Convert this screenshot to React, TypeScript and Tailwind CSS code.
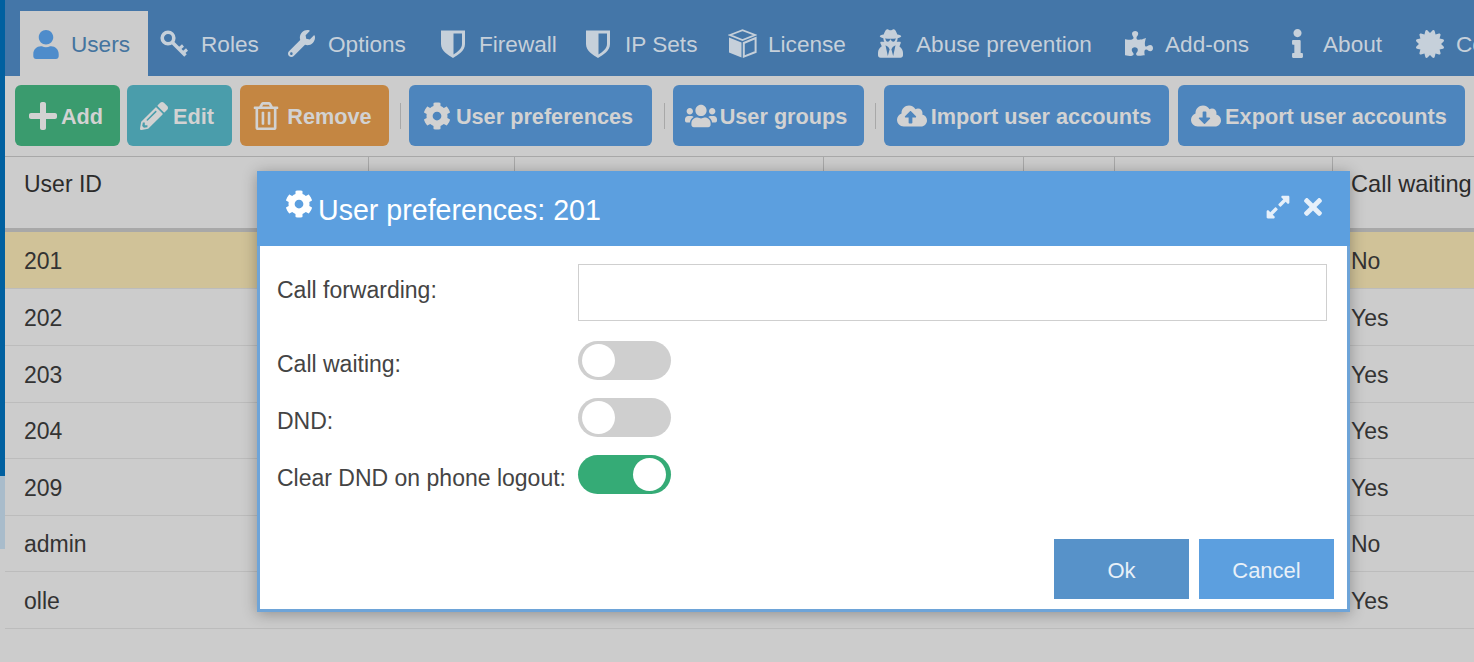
import React from "react";
import {
  FaUser, FaWrench, FaUserSecret, FaPuzzlePiece, FaInfo, FaCertificate,
  FaPlus, FaPencilAlt, FaRegTrashAlt, FaCog, FaUsers, FaCloudUploadAlt, FaCloudDownloadAlt, FaExpandAlt, FaTimes,
} from "react-icons/fa";

function KeyIcon({ className }: { className?: string }) {
  return (
    <svg viewBox="0 0 28 28" fill="none" stroke="currentColor" className={className}>
      <circle cx="8" cy="8" r="5.8" strokeWidth="3.6" />
      <path d="M12 12 L25.5 25.5" strokeWidth="3.6" />
      <path d="M19 19 L23 15.5 M23 23 L27 19.5" strokeWidth="3" />
    </svg>
  );
}

function ShieldIcon({ className }: { className?: string }) {
  return (
    <svg viewBox="0 0 24 29" fill="currentColor" fillRule="evenodd" className={className}>
      <path d="M0 1.5 H24 V15 C24 22 17 26 12 29 C7 26 0 22 0 15 Z M12.5 4.5 V25.5 C16.5 23 21 19.5 21 15 V4.5 Z" />
    </svg>
  );
}

function CubeIcon({ className }: { className?: string }) {
  return (
    <svg viewBox="0 0 29 29" fill="currentColor" className={className}>
      <path d="M1 8.5 L13.5 13.5 V28.5 L1 23.5 Z" />
      <path d="M15.8 14 L27.6 9 V23 L15.8 27.6 Z" fill="none" stroke="currentColor" strokeWidth="2" />
      <path d="M2 6 L14.5 1.2 L27 6 L14.5 11 Z" fill="none" stroke="currentColor" strokeWidth="1.8" />
    </svg>
  );
}

const tabs = [
  { label: "Roles", Icon: KeyIcon, box: "w-[28px] h-[28px]", cls: "pl-[12px] pr-[18px]", gap: "gap-[13px]", w: "w-[56px]" },
  { label: "Options", Icon: FaWrench, box: "w-[27px] h-[27px]", cls: "pl-[13px] pr-[20px]", gap: "gap-[13px]", w: "w-[80px]" },
  { label: "Firewall", Icon: ShieldIcon, box: "w-[24px] h-[29px]", cls: "pl-[13px] pr-[20px]", gap: "gap-[14px]", w: "w-[74px]" },
  { label: "IP Sets", Icon: ShieldIcon, box: "w-[24px] h-[29px]", cls: "pl-[13px] pr-[18px]", gap: "gap-[15px]", w: "w-[72px]" },
  { label: "License", Icon: CubeIcon, box: "w-[29px] h-[29px]", cls: "pl-[13px] pr-[19px]", gap: "gap-[11px]", w: "w-[78px]" },
  { label: "Abuse prevention", Icon: FaUserSecret, box: "w-[25px] h-[29px]", cls: "pl-[13px] pr-[18px]", gap: "gap-[13px]", w: "w-[178px]" },
  { label: "Add-ons", Icon: FaPuzzlePiece, box: "w-[28px] h-[27px]", cls: "pl-[13px] pr-[20px]", gap: "gap-[12px]", w: "w-[87px]" },
  { label: "About", Icon: FaInfo, box: "w-[15px] h-[29px]", cls: "pl-[18px] pr-[19px]", gap: "gap-[18px]", w: "w-[61px]" },
  { label: "Configuration", Icon: FaCertificate, box: "w-[28px] h-[28px]", cls: "pl-[13px] pr-[18px]", gap: "gap-[12px]", w: "" },
];

const columns = ["w-[363px]", "w-[146px]", "w-[309px]", "w-[200px]", "w-[91px]", "w-[218px]", "flex-1"];

const rows = [
  { id: "201", wait: "No", cls: "bg-[#d0c298] h-[57px]" },
  { id: "202", wait: "Yes", cls: "h-[57px]" },
  { id: "203", wait: "Yes", cls: "h-[57px]" },
  { id: "204", wait: "Yes", cls: "h-[56px]" },
  { id: "209", wait: "Yes", cls: "h-[57px]" },
  { id: "admin", wait: "No", cls: "h-[56px]" },
  { id: "olle", wait: "Yes", cls: "h-[57px]" },
];

function Toggle({ on }: { on?: boolean }) {
  return (
    <div
      className={`flex items-center w-[93px] h-[39px] rounded-full py-[3px] ${on ? "bg-[#35ab76] justify-end pr-[5px]" : "bg-[#cfcfcf] justify-start pl-[4px]"}`}
    >
      <div className="w-[33px] h-[33px] rounded-full bg-white" />
    </div>
  );
}

function ToolButton({ label, Icon, bg, width, icon, gap }: { label: string; Icon: React.ComponentType<{ className?: string }>; bg: string; width: string; icon: string; gap: string }) {
  return (
    <button className={`flex items-center justify-center h-[61px] pr-[5px] rounded-[6px] ${bg} ${width} ${gap} text-[#d2d2d2] font-bold text-[21.7px]`}>
      <Icon className={icon} />
      <span className="mt-[3px]">{label}</span>
    </button>
  );
}

function Sep() {
  return <div className="w-px h-[26px] mt-[18px] bg-[#a8a8a8]" />;
}

export default function App() {
  return (
    <div className="relative flex h-screen w-full overflow-hidden bg-[#cccccc] font-['Liberation_Sans',Arial,sans-serif] text-[23px]">
      <aside className="flex flex-col w-[5px] shrink-0">
        <div className="h-[476px] bg-[#0060a0]" />
        <div className="h-[73px] bg-[#a9bccb]" />
      </aside>

      <main className="flex flex-col flex-1 min-w-0">
        <nav className="flex items-end h-[76px] shrink-0 bg-[#4476a8] pl-[15px] overflow-hidden whitespace-nowrap text-[22.6px]">
          <div className="flex items-center h-[65px] gap-[12px] pl-[13px] pr-[19px] bg-[#cccccc] text-[#44749f] shrink-0">
            <FaUser className="text-[#4e8ccb] w-[26px] h-[29px] mt-[1px]" />
            <span className="w-[58px] mt-[2px]">Users</span>
          </div>
          {tabs.map(({ label, Icon, box, cls, gap, w }) => (
            <div key={label} className={`flex items-center h-[65px] text-[#c6d0da] shrink-0 ${cls} ${gap}`}>
              <Icon className={box} />
              <span className={`mt-[2px] ${w}`}>{label}</span>
            </div>
          ))}
        </nav>

        <div className="flex items-start h-[81px] shrink-0 pl-[10px] pt-[9px] border-b border-[#a8a8a8] whitespace-nowrap">
          <ToolButton label="Add" Icon={FaPlus} bg="bg-[#3a9b6e]" width="w-[105px]" icon="text-[32px]" gap="gap-[2px]" />
          <div className="w-[7px]" />
          <ToolButton label="Edit" Icon={FaPencilAlt} bg="bg-[#4a9dab]" width="w-[105px]" icon="text-[28px]" gap="gap-[5px]" />
          <div className="w-[8px]" />
          <ToolButton label="Remove" Icon={FaRegTrashAlt} bg="bg-[#c48642]" width="w-[149px]" icon="text-[28px]" gap="gap-[7px]" />
          <div className="w-[11px]" />
          <Sep />
          <div className="w-[8px]" />
          <ToolButton label="User preferences" Icon={FaCog} bg="bg-[#4d85bd]" width="w-[243px]" icon="text-[28px]" gap="gap-[5px]" />
          <div className="w-[12px]" />
          <Sep />
          <div className="w-[8px]" />
          <ToolButton label="User groups" Icon={FaUsers} bg="bg-[#4d85bd]" width="w-[191px]" icon="text-[32px]" gap="gap-[3px]" />
          <div className="w-[11px]" />
          <Sep />
          <div className="w-[8px]" />
          <ToolButton label="Import user accounts" Icon={FaCloudUploadAlt} bg="bg-[#4d85bd]" width="w-[285px]" icon="text-[30px]" gap="gap-[4px]" />
          <div className="w-[9px]" />
          <ToolButton label="Export user accounts" Icon={FaCloudDownloadAlt} bg="bg-[#4d85bd]" width="w-[287px]" icon="text-[30px]" gap="gap-[4px]" />
        </div>

        <div className="flex h-[75px] shrink-0 border-b-[4px] border-[#a8a8a8] text-[#2b2b2b] text-[23.6px] whitespace-nowrap">
          {columns.map((w, i) => (
            <div key={w} className={`${w} pt-[10px] ${i === 0 ? "pl-[19px] text-[23px]" : "border-l border-[#a8a8a8]"} ${i === 6 ? "pl-[18px]" : ""}`}>
              {i === 0 ? "User ID" : i === 6 ? "Call waiting" : ""}
            </div>
          ))}
        </div>

        {rows.map((r) => (
          <div key={r.id} className={`flex items-center shrink-0 pt-[2px] border-b border-[#bcbcbc] text-[#333333] ${r.cls}`}>
            <div className="flex-1 pl-[19px]">{r.id}</div>
            <div className="w-[123px]">{r.wait}</div>
          </div>
        ))}
      </main>

      <section className="absolute left-[257px] top-[171px] flex flex-col w-[1093px] h-[441px] bg-white border-[3px] border-t-0 border-[#6ea4d8] shadow-[0_2px_14px_rgba(0,0,0,0.3)]">
        <header className="flex items-center h-[75px] shrink-0 -mx-[3px] px-[25px] bg-[#5c9fdf] text-white text-[28.6px] whitespace-nowrap">
          <FaCog className="text-[28px] mr-[5px] -mt-[9px] ml-[3px]" />
          <span className="mt-[3px]">User preferences: 201</span>
          <div className="flex items-center gap-[9px] ml-auto -mr-[1px] -mt-[3px] text-[#e6f0fa]">
            <FaExpandAlt className="text-[26px]" />
            <FaTimes className="text-[26px]" />
          </div>
        </header>

        <div className="flex flex-col flex-1 pt-[18px] pl-[17px] pr-[20px] text-[#444444] text-[23px] whitespace-nowrap">
          <div className="flex items-center h-[57px]">
            <label className="w-[301px] -mt-[4px]">Call forwarding:</label>
            <div className="w-[749px] h-[57px] border border-[#cfcfcf]" />
          </div>
          <div className="flex items-center h-[39px] mt-[20px]">
            <label className="w-[301px] mt-[7px]">Call waiting:</label>
            <Toggle />
          </div>
          <div className="flex items-center h-[39px] mt-[18px]">
            <label className="w-[301px] mt-[7px]">DND:</label>
            <Toggle />
          </div>
          <div className="flex items-center h-[39px] mt-[18px]">
            <label className="w-[301px] mt-[7px]">Clear DND on phone logout:</label>
            <Toggle on />
          </div>
          <div className="flex justify-end gap-[10px] mt-[45px] -mr-[7px]">
            <button className="w-[135px] h-[60px] pt-[2px] bg-[#5792c9] text-[#e8f0f8] text-[22px]">Ok</button>
            <button className="w-[135px] h-[60px] pt-[2px] bg-[#5c9fdf] text-[#e8f0f8] text-[22px]">Cancel</button>
          </div>
        </div>
      </section>
    </div>
  );
}
